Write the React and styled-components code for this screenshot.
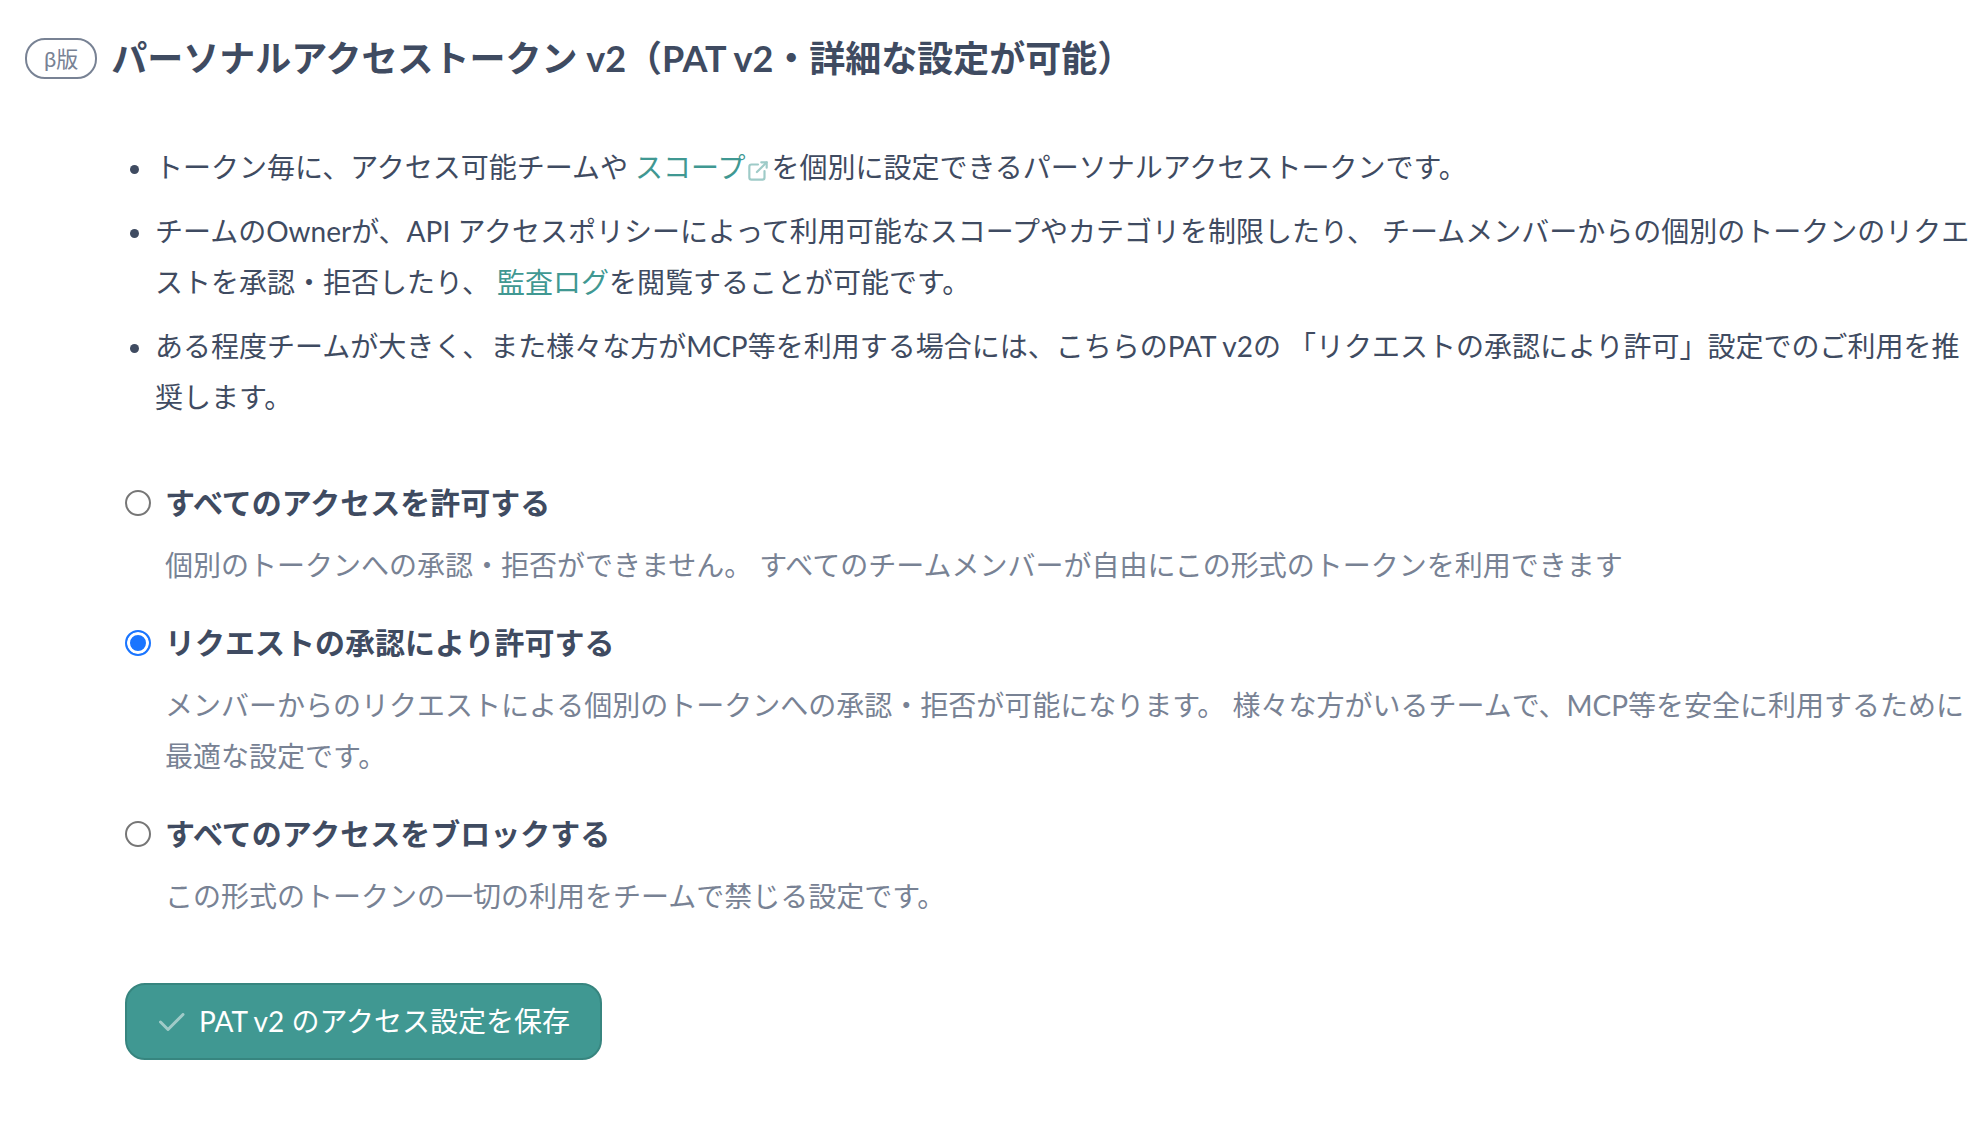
import React, { useState } from 'react';
import styled, { createGlobalStyle } from 'styled-components';
import { TbCheck, TbExternalLink } from 'react-icons/tb';

const GlobalStyle = createGlobalStyle`
  * {
    box-sizing: border-box;
  }
  body {
    margin: 0;
    background-color: #ffffff;
    color: #3f4b61;
    font-family: Lato, 'Noto Sans CJK JP', sans-serif;
    font-size: 28px;
    line-height: 51px;
  }
`;

const Page = styled.main`
  padding: 31px 12px 64px 25px;
`;

const Header = styled.header`
  display: flex;
  align-items: center;
  gap: 14px;
`;

const Badge = styled.span`
  padding: 0 17px;
  border: 2px solid #788294;
  border-radius: 20px;
  color: #788294;
  font-size: 22px;
  line-height: 37px;
`;

const Title = styled.h2`
  margin: 0;
  font-size: 36px;
  font-weight: 700;
  line-height: 54px;
`;

const Content = styled.div`
  padding: 57px 0 0 100px;
`;

const NoteList = styled.ul`
  margin: 0 0 54px;
  padding-left: 30px;
`;

const Note = styled.li`
  & + & {
    margin-top: 13px;
  }
`;

const TextLink = styled.a`
  color: #409892;
  text-decoration: none;
  &:hover {
    text-decoration: underline;
  }
`;

const ExternalIcon = styled(TbExternalLink)`
  width: 26px;
  height: 26px;
  vertical-align: middle;
  opacity: 0.5;
`;

const Option = styled.div`
  display: grid;
  grid-template-columns: 26px 1fr;
  column-gap: 14px;
  row-gap: 12px;
  align-items: center;
  margin-bottom: 26px;
`;

const Radio = styled.input`
  appearance: none;
  width: 26px;
  height: 26px;
  margin: 0;
  border: 2px solid #767676;
  border-radius: 50%;
  background-color: #ffffff;
  &:checked {
    border-color: #1a75ff;
    background-color: #1a75ff;
    box-shadow: inset 0 0 0 3px #ffffff;
  }
`;

const OptionLabel = styled.label`
  font-size: 30px;
  font-weight: 700;
`;

const Description = styled.p`
  grid-column: 2;
  margin: 0;
  color: #788294;
`;

const SaveButton = styled.button`
  display: inline-flex;
  align-items: center;
  gap: 10px;
  margin-top: 35px;
  padding: 11px 30px 11px 26px;
  border: 2px solid #37857f;
  border-radius: 20px;
  background-color: #409892;
  color: #ffffff;
  font: inherit;
  cursor: pointer;
`;

const CheckIcon = styled(TbCheck)`
  width: 36px;
  height: 36px;
  opacity: 0.5;
`;

const OPTIONS = [
  {
    value: 'allow',
    label: 'すべてのアクセスを許可する',
    description: '個別のトークンへの承認・拒否ができません。 すべてのチームメンバーが自由にこの形式のトークンを利用できます',
  },
  {
    value: 'request',
    label: 'リクエストの承認により許可する',
    description: 'メンバーからのリクエストによる個別のトークンへの承認・拒否が可能になります。 様々な方がいるチームで、MCP等を安全に利用するために最適な設定です。',
  },
  {
    value: 'block',
    label: 'すべてのアクセスをブロックする',
    description: 'この形式のトークンの一切の利用をチームで禁じる設定です。',
  },
];

const App = () => {
  const [policy, setPolicy] = useState('request');

  return (
    <Page lang="ja">
      <GlobalStyle />
      <Header>
        <Badge>β版</Badge>
        <Title>パーソナルアクセストークン v2（PAT v2・詳細な設定が可能）</Title>
      </Header>
      <Content>
        <NoteList>
          <Note>
            トークン毎に、アクセス可能チームや <TextLink href="#scopes">スコープ<ExternalIcon /></TextLink>
            を個別に設定できるパーソナルアクセストークンです。
          </Note>
          <Note>
            チームのOwnerが、API アクセスポリシーによって利用可能なスコープやカテゴリを制限したり、
            チームメンバーからの個別のトークンのリクエストを承認・拒否したり、 <TextLink href="#audit-log">監査ログ</TextLink>
            を閲覧することが可能です。
          </Note>
          <Note>
            ある程度チームが大きく、また様々な方がMCP等を利用する場合には、こちらのPAT v2の
            「リクエストの承認により許可」設定でのご利用を推奨します。
          </Note>
        </NoteList>
        <form onSubmit={(e) => e.preventDefault()}>
          {OPTIONS.map(({ value, label, description }) => (
            <Option key={value}>
              <Radio
                type="radio"
                name="policy"
                id={`policy-${value}`}
                value={value}
                checked={policy === value}
                onChange={() => setPolicy(value)}
              />
              <OptionLabel htmlFor={`policy-${value}`}>{label}</OptionLabel>
              <Description>{description}</Description>
            </Option>
          ))}
          <SaveButton type="submit">
            <CheckIcon />
            PAT v2 のアクセス設定を保存
          </SaveButton>
        </form>
      </Content>
    </Page>
  );
};

export default App;
